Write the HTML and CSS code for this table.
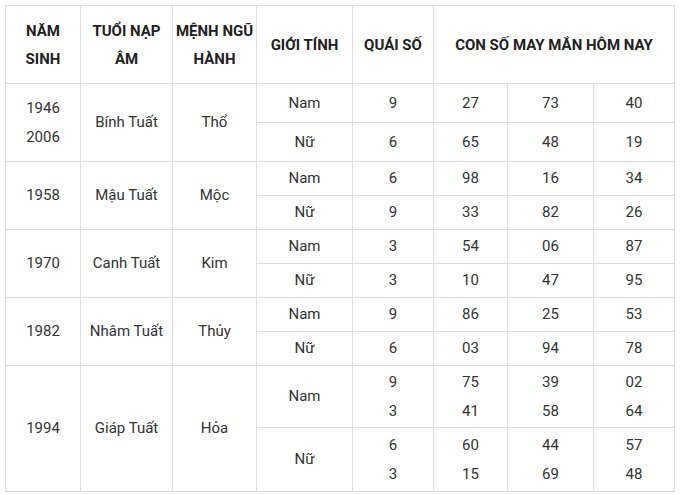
FILE: index.html
```html
<!DOCTYPE html>
<html lang="vi">
<head>
<meta charset="utf-8">
<title>Con số may mắn</title>
<link rel="stylesheet" href="styles.css">
</head>
<body>
<table class="lucky">
  <colgroup>
    <col class="c-year"><col class="c-tuoi"><col class="c-menh"><col class="c-gt"><col class="c-qs"><col class="c-n1"><col class="c-n2"><col class="c-n3">
  </colgroup>
  <thead>
    <tr class="head">
      <th>NĂM<br>SINH</th>
      <th>TUỔI NẠP<br>ÂM</th>
      <th>MỆNH NGŨ<br>HÀNH</th>
      <th>GIỚI TÍNH</th>
      <th>QUÁI SỐ</th>
      <th colspan="3">CON SỐ MAY MẮN HÔM NAY</th>
    </tr>
  </thead>
  <tbody>
    <tr class="r39">
      <td rowspan="2">1946<br>2006</td>
      <td rowspan="2">Bính Tuất</td>
      <td rowspan="2">Thổ</td>
      <td>Nam</td><td>9</td><td>27</td><td>73</td><td>40</td>
    </tr>
    <tr class="r39">
      <td>Nữ</td><td>6</td><td>65</td><td>48</td><td>19</td>
    </tr>
    <tr class="r34">
      <td rowspan="2">1958</td>
      <td rowspan="2">Mậu Tuất</td>
      <td rowspan="2">Mộc</td>
      <td>Nam</td><td>6</td><td>98</td><td>16</td><td>34</td>
    </tr>
    <tr class="r34">
      <td>Nữ</td><td>9</td><td>33</td><td>82</td><td>26</td>
    </tr>
    <tr class="r34">
      <td rowspan="2">1970</td>
      <td rowspan="2">Canh Tuất</td>
      <td rowspan="2">Kim</td>
      <td>Nam</td><td>3</td><td>54</td><td>06</td><td>87</td>
    </tr>
    <tr class="r34">
      <td>Nữ</td><td>3</td><td>10</td><td>47</td><td>95</td>
    </tr>
    <tr class="r34">
      <td rowspan="2">1982</td>
      <td rowspan="2">Nhâm Tuất</td>
      <td rowspan="2">Thủy</td>
      <td>Nam</td><td>9</td><td>86</td><td>25</td><td>53</td>
    </tr>
    <tr class="r34">
      <td>Nữ</td><td>6</td><td>03</td><td>94</td><td>78</td>
    </tr>
    <tr class="r63">
      <td rowspan="2">1994</td>
      <td rowspan="2">Giáp Tuất</td>
      <td rowspan="2">Hỏa</td>
      <td>Nam</td><td>9<br>3</td><td>75<br>41</td><td>39<br>58</td><td>02<br>64</td>
    </tr>
    <tr class="r64">
      <td>Nữ</td><td>6<br>3</td><td>60<br>15</td><td>44<br>69</td><td>57<br>48</td>
    </tr>
  </tbody>
</table>
</body>
</html>
```

FILE: styles.css
```css
html, body {
  margin: 0;
  padding: 0;
  background: #ffffff;
}

body {
  padding: 5px 0 0 5px;
  font-family: Roboto, "Liberation Sans", Arial, sans-serif;
  font-size: 15px;
  color: #333333;
}

.lucky {
  border-collapse: collapse;
  table-layout: fixed;
  width: 669px;
}

.c-year { width: 75px; }
.c-tuoi { width: 92px; }
.c-menh { width: 84px; }
.c-gt { width: 96px; }
.c-qs { width: 81px; }
.c-n1 { width: 74px; }
.c-n2 { width: 86px; }
.c-n3 { width: 81px; }

.lucky th,
.lucky td {
  border: 1px solid #dddddd;
  text-align: center;
  vertical-align: middle;
  padding: 0 2px;
  line-height: 29px;
}

.lucky th {
  font-weight: 700;
  color: #222222;
  line-height: 28px;
}

.head { height: 78px; }
.r39 { height: 39px; }
.r34 { height: 34px; }
.r63 { height: 62px; }
.r64 { height: 64px; }
```
